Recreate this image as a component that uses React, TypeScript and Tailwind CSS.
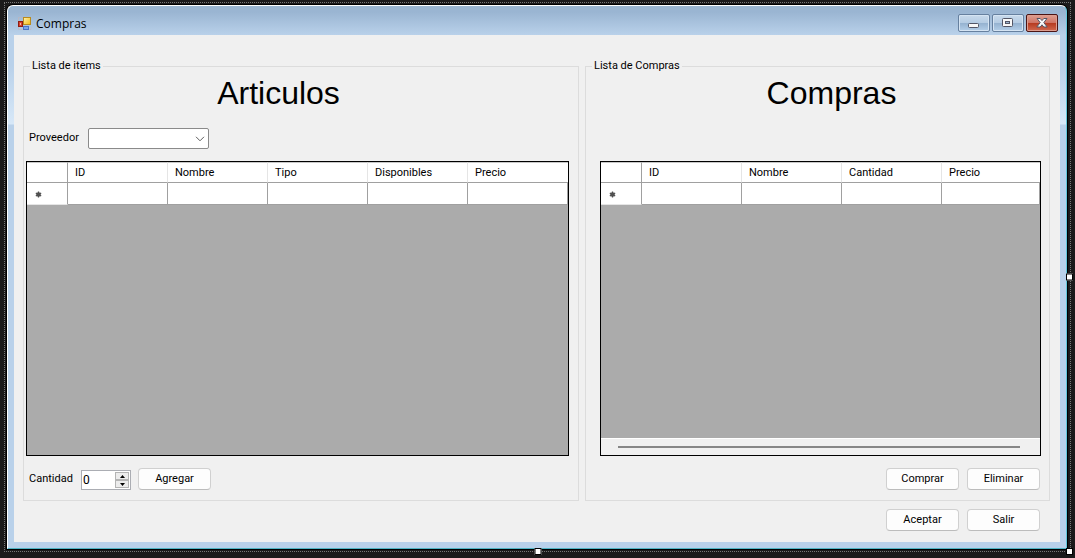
import { useState } from "react";
import type { ReactNode } from "react";

function PushButton({ children, onClick }: { children: ReactNode; onClick?: () => void }) {
  return (
    <button
      type="button"
      onClick={onClick}
      className="h-[22px] w-[73px] rounded border border-[#d0d0d0] border-b-[#bcbcbc] bg-[#fdfdfd] text-center leading-5 hover:bg-[#e5f1fb]"
    >
      {children}
    </button>
  );
}

function AppIcon() {
  return (
    <svg width="14" height="14" viewBox="0 0 14 14" aria-hidden="true">
      <defs>
        <linearGradient id="gold" x1="0" y1="0" x2="1" y2="1">
          <stop offset="0" stopColor="#fff3b0" />
          <stop offset="1" stopColor="#f3b90c" />
        </linearGradient>
      </defs>
      <path d="M.5 3.5V.5H5M.5 9.5v3h4M11.5 12.5h1.500v-3" fill="none" stroke="#c3b4b8" strokeOpacity=".6" />
      <rect x="5.5" y="0.5" width="7" height="7" fill="url(#gold)" stroke="#b98a1c" />
      <rect x="0.5" y="4.5" width="4" height="5" fill="#d8432b" stroke="#8f1d14" />
      <rect x="2" y="6" width="1" height="2" fill="#f7b5a2" />
      <rect x="5.5" y="9.5" width="5" height="3" fill="#79a5ea" stroke="#4a74c4" />
    </svg>
  );
}

function TitleBar() {
  const glass =
    "flex h-[18px] w-8 items-center justify-center rounded-[2px] border border-[#66809f] bg-[linear-gradient(to_bottom,#c8daec_0%,#b5cce3_48%,#94b1cf_50%,#b4cfe9_100%)] shadow-[inset_0_0_0_1px_#d5e4f3]";
  return (
    <header className="flex h-[29px] items-start justify-between pl-[10px] pr-2">
      <div className="flex items-center gap-1 pt-2">
        <AppIcon />
        <h1 className="font-['Open_Sans','Noto_Sans',sans-serif] text-[12px] leading-5">Compras</h1>
      </div>
      <div className="flex gap-0.5 pt-2">
        <button type="button" aria-label="Minimizar" className={glass}>
          <svg width="12" height="12" viewBox="0 0 12 12">
            <rect x="0.5" y="6.5" width="10" height="4" rx="1" fill="#f8f8f8" stroke="#535666" />
          </svg>
        </button>
        <button type="button" aria-label="Maximizar" className={glass}>
          <svg width="12" height="12" viewBox="0 0 12 12">
            <rect x="0.5" y="1.5" width="10" height="8" rx="1" fill="#f8f8f8" stroke="#535666" />
            <rect x="3.5" y="4.5" width="4" height="2" fill="#9bb4cf" stroke="#535666" />
          </svg>
        </button>
        <button
          type="button"
          aria-label="Cerrar"
          className="flex h-[18px] w-8 items-center justify-center rounded-[2px] border border-[#4b1414] bg-[linear-gradient(to_bottom,#dfa092_0%,#cf7465_48%,#b5391f_50%,#d1694f_100%)] shadow-[inset_0_0_0_1px_#dd9d8f]"
        >
          <svg width="12" height="10" viewBox="0 0 12 10">
            <path
              d="M1 .5h3.2L6 2.6 7.8.5H11L7.8 4.6 11.2 9H7.8L6 6.8 4.2 9H.8l3.4-4.4z"
              fill="#f8f8f8"
              stroke="#535666"
            />
          </svg>
        </button>
      </div>
    </header>
  );
}

function DataGrid({ label, columns, scrollbar }: { label: string; columns: string[]; scrollbar?: boolean }) {
  return (
    <div className="flex flex-1 flex-col border border-black bg-[#ababab]">
      <table aria-label={label} className="w-full table-fixed border-separate border-spacing-0 bg-white text-left">
        <thead>
          <tr className="h-[21px]">
            <th className="w-[41px] border-b border-r border-[#a0a0a0] border-t border-t-[#c8c8c8]" />
            {columns.map((name, i) => (
              <th
                key={name}
                className={
                  i === columns.length - 1
                    ? "border-b border-b-[#a0a0a0] border-t border-t-[#c8c8c8] p-0 pl-[7px] font-normal leading-4"
                    : "w-[100px] border-b border-b-[#a0a0a0] border-r border-r-[#e5e5e5] border-t border-t-[#c8c8c8] p-0 pl-[7px] font-normal leading-4"
                }
              >
                {name}
              </th>
            ))}
          </tr>
        </thead>
        <tbody>
          <tr className="h-[22px]">
            <th scope="row" aria-label="Fila nueva" className="border-b border-r border-[#a0a0a0] border-b-[#e5e5e5] p-0 pl-2 pt-0.5">
              <svg width="7" height="7" viewBox="0 0 7 7" className="block">
                <path d="M3.5 .5v6M.8 2l5.4 3M.8 5l5.4-3" stroke="#505050" strokeWidth="1.3" />
                <circle cx="3.5" cy="3.5" r="2.2" fill="#505050" />
              </svg>
            </th>
            {columns.map((name) => (
              <td key={name} className="border-b border-r border-[#a0a0a0] p-0" />
            ))}
          </tr>
        </tbody>
      </table>
      {scrollbar && (
        <div className="mt-auto flex h-[17px] items-center border-t border-white bg-[#f0f0f0] pl-[17px] pr-5">
          <div className="h-0.5 flex-1 bg-[#868686]" />
        </div>
      )}
    </div>
  );
}

function GroupBox({ title, children }: { title: string; children: ReactNode }) {
  return (
    <fieldset className="flex min-w-0 flex-col border border-[#dcdcdc]">
      <legend className="ml-[6px] px-0.5 leading-[14px]">{title}</legend>
      {children}
    </fieldset>
  );
}

export default function App() {
  const [quantity, setQuantity] = useState(0);
  const handle = "absolute size-[7px] border border-black bg-white";
  const spin = "flex h-2 w-[14px] items-center justify-center border border-[#b4b4b4] bg-[#ececec]";

  return (
    <div className="flex min-h-screen flex-col bg-[#1b1a1b] pb-[6px] pl-1 pr-1 pt-0.5 font-['Roboto','Liberation_Sans',sans-serif] text-[11px] text-black">
      <div className="relative flex flex-1 flex-col border border-dotted border-[#777777] py-0.5 pl-0.5 pr-[3px]">
        <div className="flex flex-1 flex-col rounded-t-[6px] border border-b-[#4fb4c4] border-l-white border-r-[#63c8dc] border-t-white bg-[linear-gradient(to_bottom,#9ab5d2_0px,#9ab5d2_6px,#b9d1ea_29px,#b9d1ea_60px,#d7e8f8_118px,#b9d1ea_119px)] shadow-[0_0_0_1px_#000]">
          <TitleBar />
          <main className="mx-[6px] mb-[6px] flex flex-1 flex-col bg-[#f0f0f0] pb-[11px] pl-[9px] pr-[10px] pt-6">
            <div className="grid flex-1 grid-cols-[556fr_465fr] gap-[6px]">
              <GroupBox title="Lista de items">
                <div className="flex flex-1 flex-col pb-[10px] pl-0.5 pr-[9px]">
                  <h2 className="pr-[38px] pt-px text-center font-['Liberation_Sans',Arial,sans-serif] text-[32px] leading-[38px]">
                    Articulos
                  </h2>
                  <div className="mt-4 flex items-center pl-[3px]">
                    <label htmlFor="supplier" className="w-[59px]">
                      Proveedor
                    </label>
                    <div className="relative h-[21px] w-[121px]">
                      <select
                        id="supplier"
                        className="block h-full w-full appearance-none rounded-[2px] border border-[#8a8a8a] bg-white pl-1"
                      >
                        <option value="" />
                      </select>
                      <svg
                        width="10"
                        height="6"
                        viewBox="0 0 10 6"
                        className="pointer-events-none absolute right-1 top-2"
                        aria-hidden="true"
                      >
                        <path d="M1 .8l4 4 4-4" fill="none" stroke="#606060" />
                      </svg>
                    </div>
                  </div>
                  <div className="mt-3 flex flex-1 flex-col">
                    <DataGrid label="Articulos" columns={["ID", "Nombre", "Tipo", "Disponibles", "Precio"]} />
                  </div>
                  <div className="mt-3 flex items-end pl-[3px]">
                    <label htmlFor="quantity" className="w-[52px] leading-[22px]">
                      Cantidad
                    </label>
                    <div className="flex h-5 w-[50px] items-center border border-[#abadb3] bg-white pr-px">
                      <input
                        id="quantity"
                        type="number"
                        value={quantity}
                        onChange={(e) => setQuantity(Number(e.target.value))}
                        className="h-4 w-0 min-w-0 flex-1 appearance-none pl-px text-[12px] leading-4 outline-none [-moz-appearance:textfield] [&::-webkit-inner-spin-button]:appearance-none"
                      />
                      <div className="flex flex-col">
                        <button type="button" aria-label="Aumentar" className={spin} onClick={() => setQuantity(quantity + 1)}>
                          <svg width="5" height="3" viewBox="0 0 5 3">
                            <path d="M2.5 0L5 3H0z" />
                          </svg>
                        </button>
                        <button
                          type="button"
                          aria-label="Disminuir"
                          className={spin}
                          onClick={() => setQuantity(Math.max(0, quantity - 1))}
                        >
                          <svg width="5" height="3" viewBox="0 0 5 3">
                            <path d="M2.5 3L0 0h5z" />
                          </svg>
                        </button>
                      </div>
                    </div>
                    <div className="ml-[7px] flex">
                      <PushButton>Agregar</PushButton>
                    </div>
                  </div>
                </div>
              </GroupBox>

              <GroupBox title="Lista de Compras">
                <div className="flex flex-1 flex-col pb-[10px] pl-[14px] pr-2">
                  <h2 className="pl-[22px] pt-px text-center font-['Liberation_Sans',Arial,sans-serif] text-[32px] leading-[38px]">
                    Compras
                  </h2>
                  <div className="mt-[49px] flex flex-1 flex-col">
                    <DataGrid label="Compras" columns={["ID", "Nombre", "Cantidad", "Precio"]} scrollbar />
                  </div>
                  <div className="mt-3 flex justify-end gap-2 pr-px">
                    <PushButton>Comprar</PushButton>
                    <PushButton>Eliminar</PushButton>
                  </div>
                </div>
              </GroupBox>
            </div>
            <div className="mt-2 flex justify-end gap-2 pr-[10px]">
              <PushButton>Aceptar</PushButton>
              <PushButton>Salir</PushButton>
            </div>
          </main>
        </div>
        <span className={`${handle} -right-[3px] top-1/2 -translate-y-1/2`} />
        <span className={`${handle} -bottom-1 left-1/2 -translate-x-1/2`} />
        <span className={`${handle} -bottom-1 -right-[3px]`} />
      </div>
    </div>
  );
}
